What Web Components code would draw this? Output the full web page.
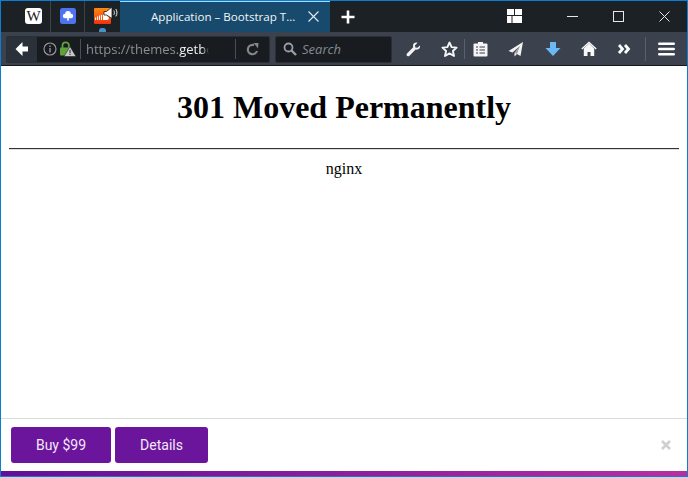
<!DOCTYPE html>
<html>
<head>
<meta charset="utf-8">
<title>301 Moved Permanently</title>
<style>
  html, body { margin: 0; padding: 0; height: 100%; overflow: hidden; }
  browser-window { height: 477px; }
</style>
</head>
<body>
<browser-window>
  <title-bar slot="chrome"></title-bar>
  <nav-bar slot="chrome"></nav-bar>
  <error-page title="301 Moved Permanently" server="nginx"></error-page>
  <buy-bar slot="footer"></buy-bar>
</browser-window>

<script>
class BrowserWindow extends HTMLElement {
  constructor() {
    super();
    this.shadowDOM = this.attachShadow({mode: 'open'});
    this.shadowDOM.innerHTML = `
    <style>
      * { box-sizing: border-box; }
      :host {
        display: flex;
        flex-direction: column;
        width: 688px;
        box-sizing: border-box;
        border: 1px solid #0a7fd6;
        background: #fff;
      }
      main { flex: 1; min-height: 0; }
    </style>
    <slot name="chrome"></slot>
    <main><slot></slot></main>
    <slot name="footer"></slot>
    `;
  }
}

class PinnedTab extends HTMLElement {
  constructor() {
    super();
    this.shadowDOM = this.attachShadow({mode: 'open'});
    this.shadowDOM.innerHTML = `
    <style>
      :host {
        display: flex;
        align-items: center;
        justify-content: center;
        position: relative;
        width: 34px;
        height: 31px;
        padding-bottom: 1px;
        border-right: 1px solid #3c4249;
        box-sizing: border-box;
      }
      :host(:last-of-type) { border-right: 0; width: 35px; }
    </style>
    <slot></slot>
    `;
  }
}

class TitleBar extends HTMLElement {
  constructor() {
    super();
    this.shadowDOM = this.attachShadow({mode: 'open'});
    this.shadowDOM.innerHTML = `
    <style>
      * { box-sizing: border-box; }
      :host {
        display: flex;
        flex: none;
        height: 31px;
        box-sizing: border-box;
        background: #1c2126;
        color: #fff;
        font-family: "Open Sans", "Liberation Sans", sans-serif;
        padding-left: 16px;
      }
      .pins { display: flex; }
      .dot {
        position: absolute; left: 14px; top: 27px;
        width: 7px; height: 4px; border-radius: 3px 3px 0 0; background: #4a90c8;
      }
      .speaker { position: absolute; left: 18px; top: 5px; }
      .tab {
        display: flex;
        align-items: center;
        width: 210px;
        padding-left: 31px;
        padding-bottom: 1px;
        background: #174a6d;
        border-top: 1px solid #a9d8f5;
        font-size: 11.6px;
        color: #f1f5f8;
        white-space: nowrap;
      }
      .tab span { flex: 1; }
      .tab svg { margin-right: 11px; }
      .new { display: flex; align-items: center; margin-left: 11px; }
      .spacer { flex: 1; }
      .grid { display: flex; align-items: center; margin-right: 27px; padding-bottom: 1px; }
      .ctl { width: 46px; display: flex; align-items: center; justify-content: center; padding-bottom: 1px; }
    </style>
    <div class="pins">
      <pinned-tab>
        <svg width="17" height="16" viewBox="0 0 17 16">
          <rect width="17" height="16" rx="3" fill="#fff"/>
          <text x="8.500" y="12.500" text-anchor="middle" font-family="Liberation Serif, serif" font-size="15" fill="#222">W</text>
        </svg>
      </pinned-tab>
      <pinned-tab>
        <svg width="16" height="16" viewBox="0 0 16 16">
          <rect width="16" height="16" rx="2.500" fill="#4f73f0"/>
          <circle cx="8" cy="5.800" r="2.800" fill="#fff"/>
          <circle cx="5" cy="8" r="2.200" fill="#fff"/>
          <circle cx="11" cy="8" r="2.200" fill="#fff"/>
          <rect x="5" y="7" width="6" height="3.200" fill="#fff"/>
          <path d="M7.500 9h1l.5 3.500H7z" fill="#fff"/>
        </svg>
      </pinned-tab>
      <pinned-tab>
        <svg width="17" height="16" viewBox="0 0 17 16">
          <defs><linearGradient id="sc" x1="0" y1="0" x2="0" y2="1"><stop offset="0" stop-color="#f98a12"/><stop offset="1" stop-color="#f3300f"/></linearGradient></defs>
          <rect width="17" height="16" rx="1" fill="url(#sc)"/>
          <path d="M1.500 12V9.500M3.500 12V8.500M5.500 12V7.500M7.500 12V7" stroke="#fff" stroke-width="1.100"/>
          <path d="M9 12V6.500c2-1.500 4 0 4 1.500 2.500 0 2.500 4 0 4z" fill="#fff"/>
        </svg>
        <svg class="speaker" width="15" height="14" viewBox="0 0 15 14">
          <path d="M1 5.500h2.500L9 1v11.500L3.500 9H1z" fill="#f6f6f6" stroke="#1a1a1a" stroke-width=".8"/>
          <path d="M10.800 4.500c.8 1.300.8 3 0 4.300M12.800 3c1.500 2.200 1.500 5.200 0 7.400" fill="none" stroke="#eee" stroke-width="1"/>
        </svg>
        <div class="dot"></div>
      </pinned-tab>
    </div>
    <div class="tab">
      <span>Application – Bootstrap T...</span>
      <svg width="11" height="11" viewBox="0 0 11 11"><path d="M.5.500l10 10M10.500.500l-10 10" stroke="#e6edf2" stroke-width="1.100"/></svg>
    </div>
    <div class="new">
      <svg width="14" height="14" viewBox="0 0 14 14"><path d="M7 .5v13M.5 7h13" stroke="#fff" stroke-width="2.600"/></svg>
    </div>
    <div class="spacer"></div>
    <div class="grid">
      <svg width="15" height="14" viewBox="0 0 15 14" fill="#fff">
        <rect width="7" height="6"/><rect x="8" width="7" height="6"/>
        <rect y="7" width="4.500" height="7"/><rect x="5.500" y="7" width="9.500" height="7"/>
      </svg>
    </div>
    <div class="ctl"><svg width="11" height="11" viewBox="0 0 11 11"><path d="M0 5.500h11" stroke="#e8e8e8"/></svg></div>
    <div class="ctl"><svg width="11" height="11" viewBox="0 0 11 11"><rect x=".5" y=".5" width="10" height="10" fill="none" stroke="#e8e8e8"/></svg></div>
    <div class="ctl"><svg width="11" height="11" viewBox="0 0 11 11"><path d="M.5.500l10 10M10.500.500l-10 10" stroke="#e8e8e8"/></svg></div>
    `;
  }
}

class NavBar extends HTMLElement {
  constructor() {
    super();
    this.shadowDOM = this.attachShadow({mode: 'open'});
    this.shadowDOM.innerHTML = `
    <style>
      * { box-sizing: border-box; }
      :host {
        display: flex;
        flex: none;
        align-items: center;
        height: 34px;
        box-sizing: border-box;
        padding: 3px 0 2px 5px;
        background: #3b424e;
        border-bottom: 1px solid #15181c;
        color: #fff;
        font-family: "Open Sans", "Liberation Sans", sans-serif;
        font-size: 13px;
      }
      .urlbar {
        display: flex;
        align-items: center;
        width: 264px;
        height: 27px;
        background: #181c21;
        border: 1px solid #2a2f36;
        border-radius: 2px;
      }
      .back {
        display: flex; align-items: center; justify-content: center;
        width: 30px; height: 100%;
        background: #2b313a;
      }
      .info { display: flex; align-items: center; gap: 3px; margin-left: 6px; }
      .sep { width: 1px; height: 20px; background: #4a4f57; flex: none; }
      .url {
        width: 123px; margin-left: 5px; white-space: nowrap; flex: none;
        color: #8b8f94;
        -webkit-mask-image: linear-gradient(to right, #000 94%, transparent);
      }
      .url b { font-weight: 400; color: #eceef0; }
      .reload { margin-left: 10px; display: flex; }
      .search {
        display: flex;
        align-items: center;
        width: 117px;
        height: 27px;
        margin-left: 5px;
        padding-left: 7px;
        gap: 5px;
        background: #181c21;
        border: 1px solid #2a2f36;
        border-radius: 2px;
        color: #858a90;
        font-style: italic;
      }
      .tools { display: flex; align-items: center; margin-left: 14px; }
      .tool { display: flex; justify-content: center; align-items: center; height: 24px; }
      .tsep { width: 1px; height: 20px; background: #5a616c; }
    </style>
    <div class="urlbar">
      <div class="back">
        <svg width="14" height="14" viewBox="0 0 14 14"><path d="M7.500 0L.5 7l7 7V9.500H13v-5H7.500z" fill="#fff"/></svg>
      </div>
      <div class="info">
        <svg width="14" height="14" viewBox="0 0 14 14"><circle cx="7" cy="7" r="6" fill="none" stroke="#9a9da1" stroke-width="1.100"/><path d="M7 6v4.500M7 3.500v1.500" stroke="#9a9da1" stroke-width="1.300"/></svg>
        <svg width="16" height="16" viewBox="0 0 16 16">
          <path d="M2.500 7V4.500a3.200 3.200 0 016.400 0V7" fill="none" stroke="#5ea13a" stroke-width="1.800"/>
          <rect x="0" y="6.500" width="11" height="8" rx="1" fill="#5ea13a"/>
          <path d="M10 5.500L16 15.500H4z" fill="#c9c9c9" stroke="#222" stroke-width=".6"/>
          <path d="M10 8.800v3.500M10 13v1" stroke="#222" stroke-width="1"/>
        </svg>
      </div>
      <div class="sep" style="margin-left:4px"></div>
      <div class="url">https://themes.<b>getbo</b></div>
      <div class="sep" style="margin-left:26px"></div>
      <div class="reload">
        <svg width="13" height="13" viewBox="0 0 13 13"><path d="M11 8A4.700 4.700 0 116.500 1.800H8" fill="none" stroke="#83878c" stroke-width="2.200"/><path d="M7.500 0l5 0-.5 5.500z" fill="#83878c"/></svg>
      </div>
    </div>
    <div class="search">
      <svg width="14" height="14" viewBox="0 0 14 14"><circle cx="5.500" cy="5.500" r="4" fill="none" stroke="#9a9da1" stroke-width="1.800"/><path d="M8.500 8.500l4.500 4.500" stroke="#9a9da1" stroke-width="2.400"/></svg>
      <span>Search</span>
    </div>
    <div class="tools">
      <div class="tool" style="width:15px">
        <svg width="15" height="15" viewBox="0 0 15 15"><path d="M14 3.500l-2.600 2.300-2-.4-.5-2L11.500.8C9.500 0 7 1.200 7 3.800c0 .6.100 1 .2 1.400L1 11.500c-1 1-.3 3 1.300 2.800.5 0 .9-.3 1.200-.6L9.600 7.500c2.700.8 5-1.500 4.400-4z" fill="#f3f3f3"/></svg>
      </div>
      <div class="tool" style="width:17px;margin-left:20px">
        <svg width="17" height="17" viewBox="0 0 17 17"><path d="M8.500 1.500l2.100 4.600 5 .5-3.700 3.400 1.100 5L8.500 12.400 4 15l1.100-5L1.400 6.600l5-.5z" fill="none" stroke="#f5f5f5" stroke-width="1.900" stroke-linejoin="round"/></svg>
      </div>
      <div class="tsep" style="margin-left:6px"></div>
      <div class="tool" style="width:15px;margin-left:8px">
        <svg width="15" height="16" viewBox="0 0 15 16"><path d="M5 2.500V1h5v1.500h3.500a1 1 0 011 1v11a1 1 0 01-1 1h-12a1 1 0 01-1-1v-11a1 1 0 011-1z" fill="#f5f5f5"/><path d="M3 6h2M6.500 6H12M3 9h2M6.500 9H12M3 12h2M6.500 12H12" stroke="#3b424e" stroke-width="1.200"/></svg>
      </div>
      <div class="tool" style="width:16px;margin-left:20px">
        <svg width="16" height="16" viewBox="0 0 16 16"><path d="M15 1L.5 10l4 1.500L12 5 6.500 12V15.500l2.500-2.500 3.500 2z" fill="#f2f2f2"/><path d="M12 5L6.500 12l2.500 1" fill="#9ea2a8"/></svg>
      </div>
      <div class="tool" style="width:16px;margin-left:21px">
        <svg width="16" height="16" viewBox="0 0 16 16"><path d="M5 1h6v6h4.500L8 15 .5 7H5z" fill="#6cb8f6"/></svg>
      </div>
      <div class="tool" style="width:16px;margin-left:20px">
        <svg width="16" height="16" viewBox="0 0 16 16"><path d="M8 2.600L2.800 7.400V15h3.700v-4h3v4h3.700V7.400z" fill="#f8f8f8"/><path d="M.8 8L8 1.400 15.200 8" fill="none" stroke="#f8f8f8" stroke-width="1.400"/></svg>
      </div>
      <div class="tool" style="width:13px;margin-left:21px">
        <svg width="13" height="10" viewBox="0 0 13 10"><path d="M1 1l3.500 4L1 9M7 1l3.500 4L7 9" fill="none" stroke="#fff" stroke-width="2.800"/></svg>
      </div>
      <div class="tsep" style="margin-left:14px;height:24px"></div>
      <div class="tool" style="width:17px;margin-left:12px">
        <svg width="17" height="14" viewBox="0 0 17 14"><path d="M1.300 1.800h14.400M1.300 7h14.400M1.300 12.200h14.400" stroke="#fff" stroke-width="2.600" stroke-linecap="round"/></svg>
      </div>
    </div>
    `;
  }
}

class ErrorPage extends HTMLElement {
  constructor() {
    super();
    this.shadowDOM = this.attachShadow({mode: 'open'});
  }

  connectedCallback() {
    this.render();
  }

  render() {
    this.shadowDOM.innerHTML = `
    <style>
      :host {
        display: block;
        height: 100%;
        padding: 8px;
        box-sizing: border-box;
        font-family: "Liberation Serif", serif;
        color: #000;
        background: #fff;
        text-align: center;
      }
      h1 { margin: 15px 0 22px; font-size: 32px; line-height: 37px; }
      hr { margin: 8px 0 10px; border: 0; border-top: 1px solid #333; border-bottom: 1px solid #ddd; }
      p { margin: 0; font-size: 16px; line-height: 18px; }
    </style>
    <h1>${this.getAttribute('title')}</h1>
    <hr>
    <p>${this.getAttribute('server')}</p>
    `;
  }
}

class BuyBar extends HTMLElement {
  constructor() {
    super();
    this.shadowDOM = this.attachShadow({mode: 'open'});
    this.shadowDOM.innerHTML = `
    <style>
      * { box-sizing: border-box; }
      :host {
        display: flex;
        flex: none;
        flex-direction: column;
        font-family: Roboto, "Liberation Sans", sans-serif;
      }
      .row {
        display: flex;
        align-items: center;
        height: 53px;
        padding: 0 16px 0 10px;
        gap: 4px;
        background: #fff;
        border-top: 1px solid #dcdcdc;
      }
      .btn {
        display: flex; align-items: center; justify-content: center;
        height: 36px;
        border-radius: 3px;
        background: #6a159c;
        color: #f3e9f8;
        font-size: 14px;
      }
      .close { margin-left: auto; display: flex; }
      .strip { height: 5px; background: linear-gradient(to right, #5f1197, #b5309f); }
    </style>
    <div class="row">
      <div class="btn" style="width:100px">Buy $99</div>
      <div class="btn" style="width:93px">Details</div>
      <div class="close">
        <svg width="10" height="10" viewBox="0 0 10 10"><path d="M1 1l8 8M9 1l-8 8" stroke="#cfcfcf" stroke-width="2.600"/></svg>
      </div>
    </div>
    <div class="strip"></div>
    `;
  }
}

customElements.define('pinned-tab', PinnedTab);
customElements.define('title-bar', TitleBar);
customElements.define('nav-bar', NavBar);
customElements.define('error-page', ErrorPage);
customElements.define('buy-bar', BuyBar);
customElements.define('browser-window', BrowserWindow);
</script>
</body>
</html>
